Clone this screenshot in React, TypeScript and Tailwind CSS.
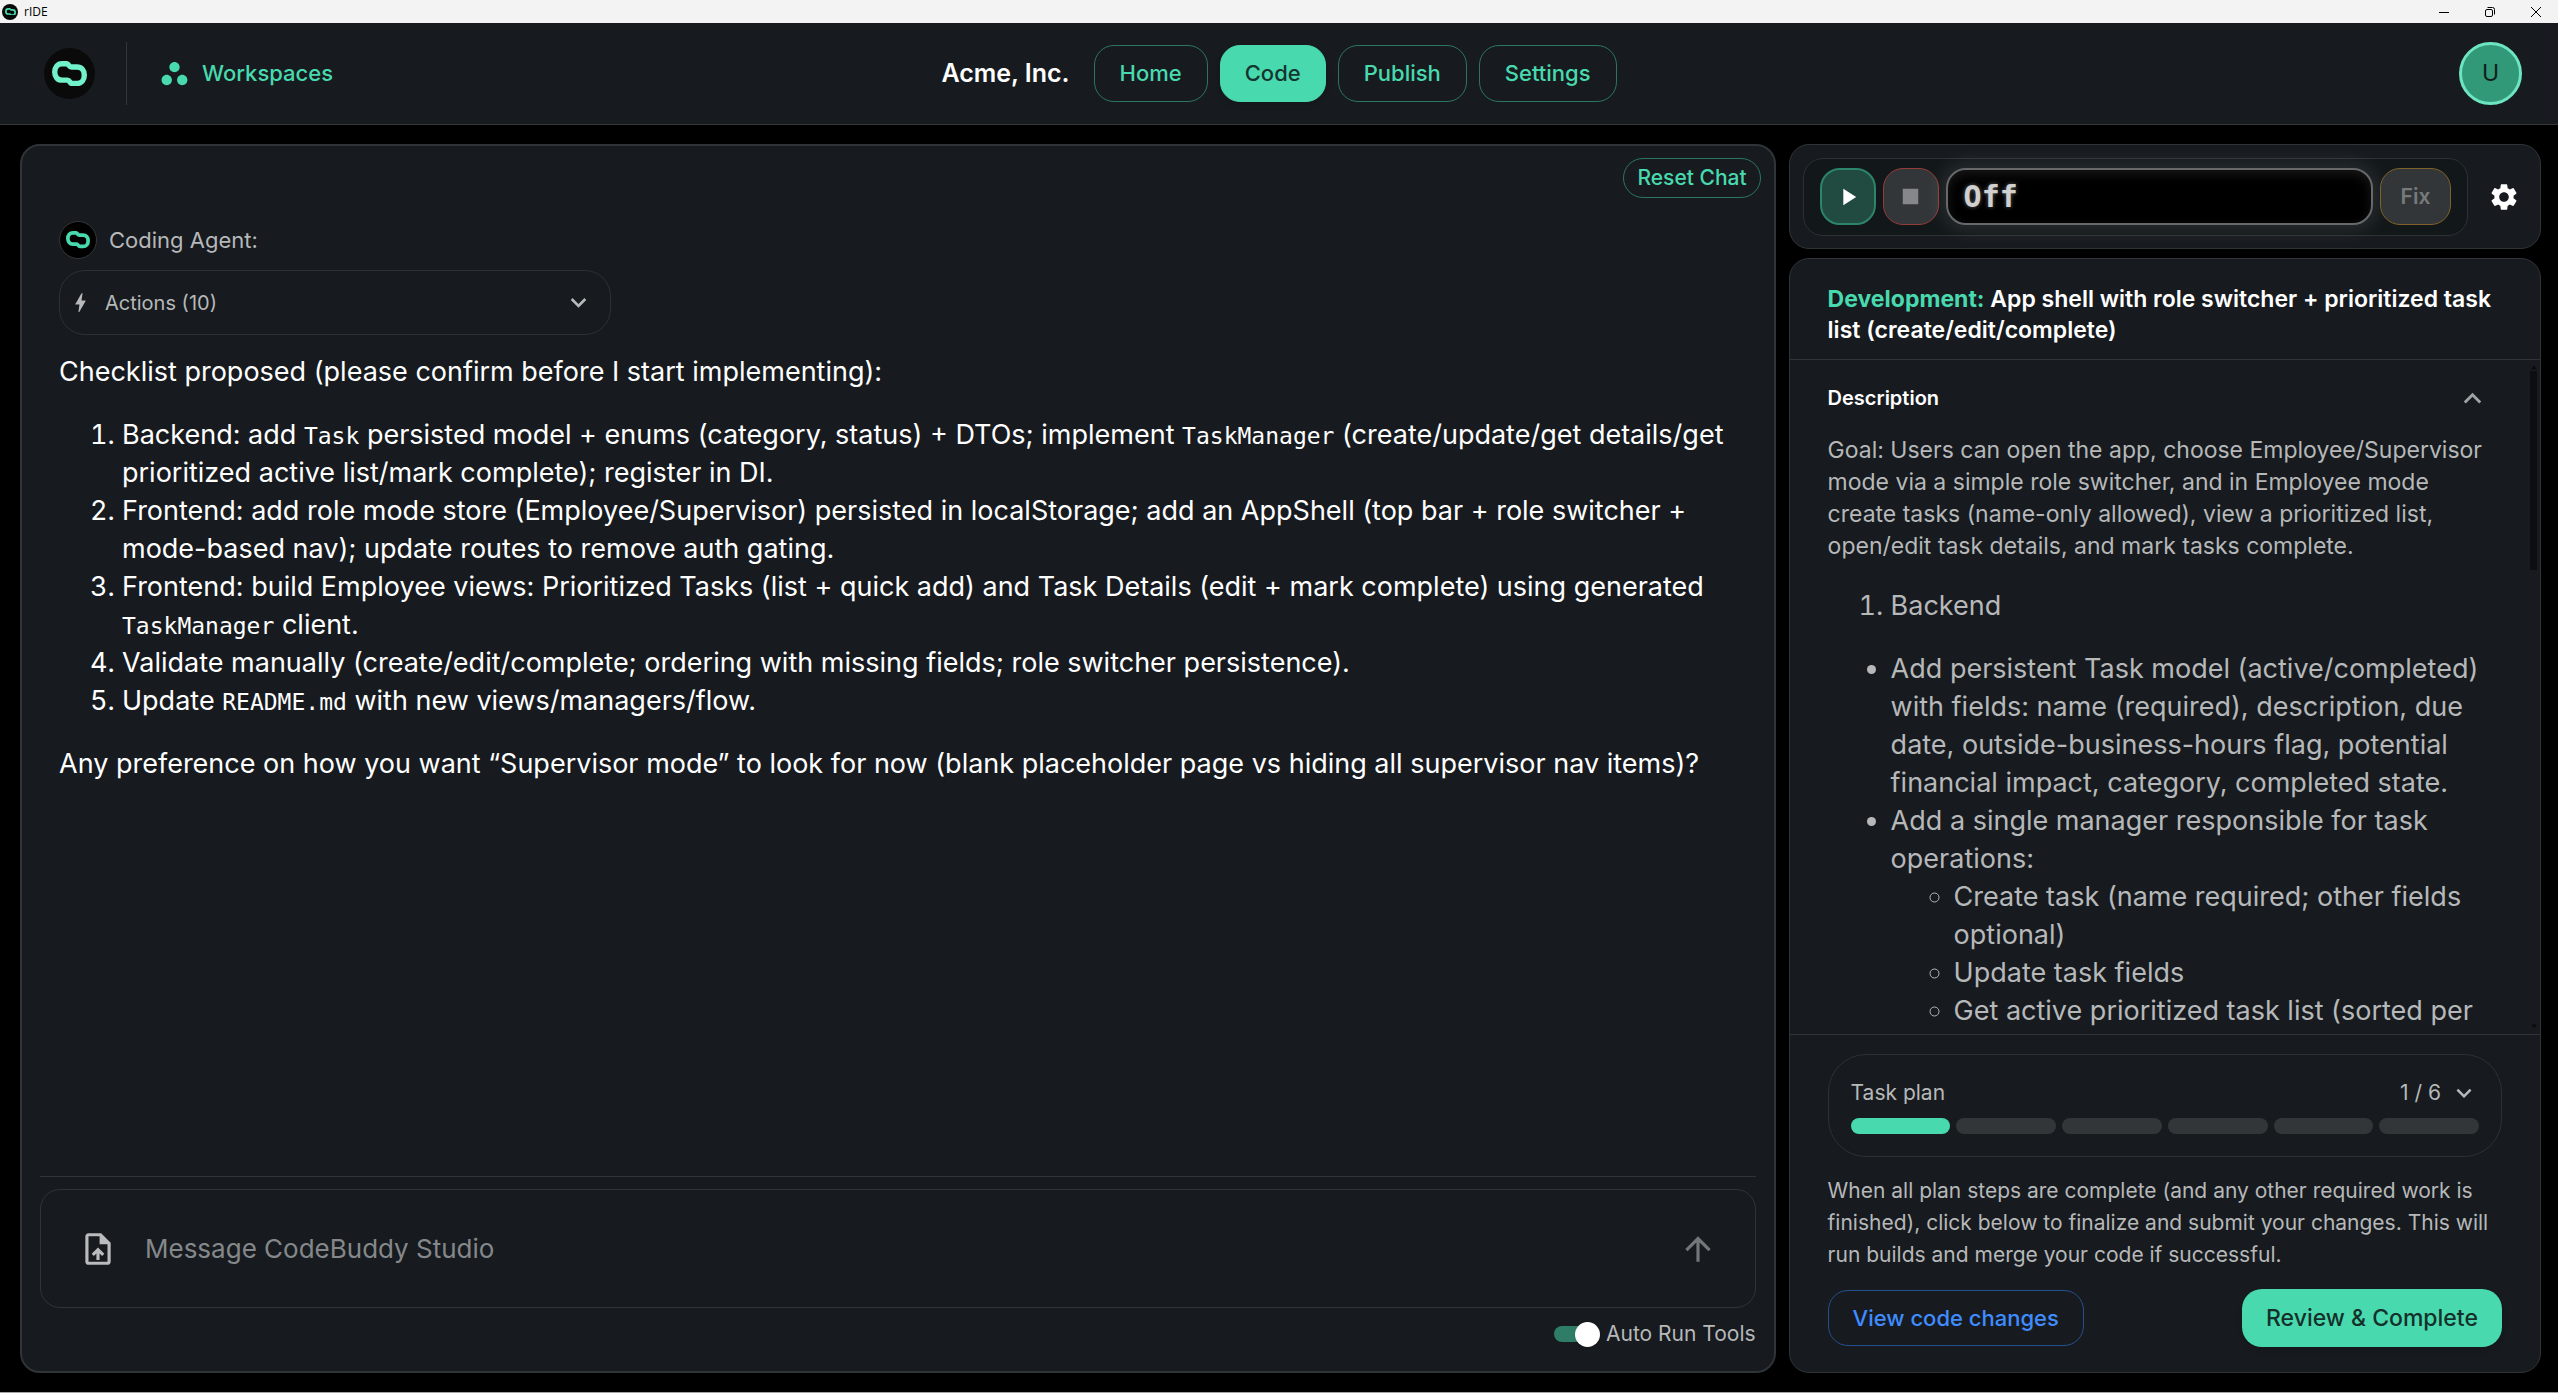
import type { ReactNode } from 'react';
import {
  MdArrowUpward,
  MdBolt,
  MdExpandLess,
  MdExpandMore,
  MdOutlineUploadFile,
  MdPlayArrow,
  MdSettings,
  MdStop,
  MdWorkspaces,
} from 'react-icons/md';

const Logo = ({ className }: { className: string }) => (
  <svg viewBox="0 0 104 75" className={className} fill="none" stroke="currentColor" strokeWidth="16" strokeLinejoin="round">
    <path d="M30 8H44C50 8 50 18 58 18H74C88 18 96 28 96 42S88 67 74 67H60C53 67 53 57 46 57H30C16 57 8 47 8 33S16 8 30 8Z" />
  </svg>
);

const navItems = ['Home', 'Code', 'Publish', 'Settings'];

const Mono = ({ children }: { children: ReactNode }) => (
  <code className="font-['DejaVu_Sans_Mono',monospace] text-[23px] leading-none">{children}</code>
);

const TitleBar = () => (
  <div className="flex h-[23px] shrink-0 items-center bg-[#f3f3f3] text-black">
    <span className="ml-0.5 flex size-4 items-center justify-center rounded-full bg-[#0a0a0a] text-[#48daae]">
      <Logo className="w-[11px]" />
    </span>
    <span className="ml-1.5 font-['Open_Sans',sans-serif] text-xs">rIDE</span>
    <div className="ml-auto flex items-center gap-[34px] pr-4">
      <button type="button" aria-label="Minimize">
        <svg className="size-3" viewBox="0 0 12 12" stroke="currentColor" fill="none"><path d="M1 6.500h10" /></svg>
      </button>
      <button type="button" aria-label="Restore">
        <svg className="size-3" viewBox="0 0 12 12" stroke="currentColor" fill="none">
          <rect x="1.500" y="3.500" width="7" height="7" rx="1.500" />
          <path d="M3.500 1.500h5a2 2 0 0 1 2 2v5" />
        </svg>
      </button>
      <button type="button" aria-label="Close">
        <svg className="size-3" viewBox="0 0 12 12" stroke="currentColor" fill="none"><path d="M1 1l10 10M11 1L1 11" /></svg>
      </button>
    </div>
  </div>
);

const Header = () => (
  <header className="grid h-[102px] shrink-0 grid-cols-[1fr_auto_1fr] items-center border-b border-[#343739] bg-[#171b1f] px-9">
    <div className="flex items-center pl-2">
      <span className="flex size-[51px] items-center justify-center rounded-full bg-[#0a0a0a] text-[#72f2cb]">
        <Logo className="w-[35px]" />
      </span>
      <span className="ml-[31px] h-[63px] w-px bg-[#343739]" />
      <a href="#workspaces" className="ml-8 flex items-center gap-3 text-[22px] font-medium text-[#48daae]">
        <MdWorkspaces size={31} />
        Workspaces
      </a>
    </div>

    <nav className="flex items-center gap-3">
      <h1 className="mr-3 text-[25px] font-semibold text-white">Acme, Inc.</h1>
      {navItems.map((item) => (
        <button
          key={item}
          type="button"
          className={
            item === 'Code'
              ? 'h-[57px] rounded-[20px] border border-[#48daae] bg-[#48daae] px-6 text-[22px] font-medium text-[#15362e] shadow-md'
              : 'h-[57px] rounded-[20px] border border-[#2b7562] px-[25px] text-[22px] font-medium text-[#48daae]'
          }
        >
          {item}
        </button>
      ))}
    </nav>

    <button type="button" className="size-[63px] justify-self-end rounded-full border-3 border-[#6de5c0] bg-[#319878] text-[23px] text-[#0f1f1b]">
      U
    </button>
  </header>
);

const ChatPanel = () => (
  <section className="flex min-h-0 flex-col rounded-[20px] border-2 border-[#2f3437] bg-[#171b1f] px-[18px]">
    <button type="button" className="mt-3 -mr-[5px] h-10 self-end rounded-[20px] border border-[#2b7562] px-[13px] text-[21px] font-medium text-[#48daae]">
      Reset Chat
    </button>

    <div className="mt-[23px] min-h-0 flex-1 px-[19px] text-[27px]/[38px] text-white">
      <div className="flex items-center gap-3 text-[#b6b8b9]">
        <span className="flex size-[38px] items-center justify-center rounded-full border border-[#343739] bg-black text-[#48daae]">
          <Logo className="w-6" />
        </span>
        <span className="text-[22px]">Coding Agent:</span>
      </div>
      <button type="button" className="mt-[11px] flex h-[65px] w-[552px] items-center rounded-[26px] border border-[#2c3134] pr-4 pl-2 text-[20px] text-[#b6b8b9]">
        <MdBolt size={25} />
        <span className="ml-3">Actions (10)</span>
        <MdExpandMore size={31} className="ml-auto" />
      </button>

      <p className="mt-[18px]">Checklist proposed (please confirm before I start implementing):</p>
      <ol className="my-[25px] list-decimal pl-[63px]">
        <li>
          Backend: add <Mono>Task</Mono> persisted model + enums (category, status) + DTOs; implement <Mono>TaskManager</Mono> (create/update/get details/get prioritized active list/mark complete); register in DI.
        </li>
        <li>
          Frontend: add role mode store (Employee/Supervisor) persisted in localStorage; add an AppShell (top bar + role switcher + mode-based nav); update routes to remove auth gating.
        </li>
        <li>
          Frontend: build Employee views: Prioritized Tasks (list + quick add) and Task Details (edit + mark complete) using generated <Mono>TaskManager</Mono> client.
        </li>
        <li>Validate manually (create/edit/complete; ordering with missing fields; role switcher persistence).</li>
        <li>
          Update <Mono>README.md</Mono> with new views/managers/flow.
        </li>
      </ol>
      <p>Any preference on how you want “Supervisor mode” to look for now (blank placeholder page vs hiding all supervisor nav items)?</p>
    </div>

    <div className="border-t border-[#2f3437] pt-3 pb-[18px]">
      <form className="flex h-[119px] items-center rounded-[20px] border border-[#2f3437] px-[38px]">
        <button type="button" aria-label="Attach file" className="text-[#b9bbbc]">
          <MdOutlineUploadFile size={38} />
        </button>
        <input
          type="text"
          aria-label="Message"
          placeholder="Message CodeBuddy Studio"
          className="ml-7 min-w-0 flex-1 bg-transparent text-[26px] outline-none placeholder:text-[#85888a]"
        />
        <button type="submit" aria-label="Send" className="text-[#747779]">
          <MdArrowUpward size={38} />
        </button>
      </form>
      <label className="mt-[7px] flex items-center justify-end gap-1.5 text-[21px]/[38px] text-[#b6b8b9]">
        <span className="relative flex h-[25px] w-[46px] items-center">
          <input type="checkbox" defaultChecked className="peer h-4 w-[42px] appearance-none rounded-full bg-[#2f7d67]" />
          <span className="absolute right-0 size-[25px] rounded-full bg-white shadow" />
        </span>
        Auto Run Tools
      </label>
    </div>
  </section>
);

const RunControls = () => (
  <section className="flex h-[105px] shrink-0 items-center rounded-[20px] border border-[#2f3437] bg-[#171b1f] pr-5 pl-[13px]">
    <div className="flex h-[78px] flex-1 items-center gap-[7px] rounded-[20px] border border-[#2c3134] bg-[#12171a] px-4">
      <button type="button" aria-label="Run" className="flex h-[57px] w-14 items-center justify-center rounded-[20px] border-2 border-[#2c8469] bg-[#214a40] text-white">
        <MdPlayArrow size={28} />
      </button>
      <button type="button" aria-label="Stop" className="flex h-[57px] w-14 items-center justify-center rounded-[20px] border border-[#953b38] bg-[#323639] text-[#858789]">
        <MdStop size={31} />
      </button>
      <output className="flex h-[57px] flex-1 items-center rounded-[20px] border-2 border-[#66686a] bg-black px-4 font-['DejaVu_Sans_Mono',monospace] text-[30px] font-bold text-[#d0d0d0] shadow-[0_0_20px_4px_#ffffff1c,inset_0_4px_12px_#ffffff18]">
        <span className="[text-shadow:0_0_4px_#ffffff60]">Off</span>
      </output>
      <button type="button" className="h-[57px] w-[71px] rounded-[20px] border border-[#806126] bg-[#323639] text-[21px] font-semibold text-[#777a7b]">
        Fix
      </button>
    </div>
    <button type="button" aria-label="Settings" className="ml-5 text-white">
      <MdSettings size={32} />
    </button>
  </section>
);

const TaskPanel = () => (
  <section className="flex min-h-0 flex-1 flex-col overflow-hidden rounded-[20px] border border-[#2f3437] bg-[#171b1f] text-[#b6b8b9]">
    <h2 className="border-b border-[#2f3437] px-[38px] pt-[25px] pb-[13px] text-[23px]/[31px] font-semibold text-white">
      <span className="font-bold text-[#48daae]">Development:</span> App shell with role switcher + prioritized task list (create/edit/complete)
    </h2>

    <div className="flex min-h-0 flex-1">
      <div className="min-h-0 flex-1 overflow-hidden pl-[38px]">
        <button type="button" className="mt-[19px] flex h-[38px] w-full items-center justify-between pr-10 text-[20px] font-semibold text-white">
          Description
          <MdExpandLess size={35} className="text-[#a0a3a4]" />
        </button>
        <p className="mt-[17px] pr-10 text-[23px]/[32px]">
          Goal: Users can open the app, choose Employee/Supervisor mode via a simple role switcher, and in Employee mode create tasks (name-only allowed), view a prioritized list, open/edit task details, and mark tasks complete.
        </p>
        <div className="pr-6 text-[27px]/[38px]">
          <ol className="my-[25px] list-decimal pl-[63px]">
            <li>Backend</li>
          </ol>
          <ul className="list-disc pl-[63px]">
            <li>
              Add persistent Task model (active/completed) with fields: name (required), description, due date, outside-business-hours flag, potential financial impact, category, completed state.
            </li>
            <li>
              Add a single manager responsible for task operations:
              <ul className="list-[circle] pl-[63px]">
                <li>Create task (name required; other fields optional)</li>
                <li>Update task fields</li>
                <li>Get active prioritized task list (sorted per</li>
              </ul>
            </li>
          </ul>
        </div>
      </div>
      <div className="mr-[3px] flex w-[7px] flex-col items-center py-1 text-[#090c0e]">
        <svg viewBox="0 0 6 4" className="h-[7px] w-1.5" fill="currentColor"><path d="M0 4L3 0L6 4Z" /></svg>
        <span className="h-[199px] w-full bg-[#0b0f12]" />
        <svg viewBox="0 0 6 4" className="mt-auto h-[7px] w-1.5" fill="currentColor"><path d="M0 0L3 4L6 0Z" /></svg>
      </div>
    </div>

    <div className="border-t border-[#2f3437] px-[38px] pt-[19px] pb-[25px] text-[21px]">
      <div className="rounded-[38px] border border-[#2c3134] p-[22px]">
        <button type="button" className="flex h-8 w-full items-center">
          Task plan
          <span className="ml-auto">1 / 6</span>
          <MdExpandMore size={30} className="ml-2" />
        </button>
        <div className="mt-[9px] grid grid-cols-6 gap-1.5">
          {[1, 2, 3, 4, 5, 6].map((step) => (
            <span key={step} className={step === 1 ? 'h-4 rounded-lg bg-[#48daae]' : 'h-4 rounded-lg bg-[#323639]'} />
          ))}
        </div>
      </div>
      <p className="mt-[18px] text-[21px]/[32px]">
        When all plan steps are complete (and any other required work is finished), click below to finalize and submit your changes. This will run builds and merge your code if successful.
      </p>
      <div className="mt-[18px] flex items-center justify-between">
        <button type="button" className="h-14 rounded-[20px] border border-[#25508f] px-6 text-[22px] font-medium text-[#3f8cff]">
          View code changes
        </button>
        <button type="button" className="h-[58px] rounded-[20px] bg-[#48daae] px-6 text-[23px] font-medium text-[#15302a] shadow-md">
          Review &amp; Complete
        </button>
      </div>
    </div>
  </section>
);

const App = () => {
  return (
    <div className="flex h-screen flex-col border-b border-[#a5a5a5] bg-black font-['Inter',sans-serif]">
      <TitleBar />
      <Header />
      <main className="grid min-h-0 flex-1 grid-cols-[7fr_3fr] gap-[13px] py-[19px] pr-[17px] pl-5">
        <ChatPanel />
        <div className="flex min-h-0 min-w-0 flex-col gap-[9px]">
          <RunControls />
          <TaskPanel />
        </div>
      </main>
    </div>
  );
};

export default App;
